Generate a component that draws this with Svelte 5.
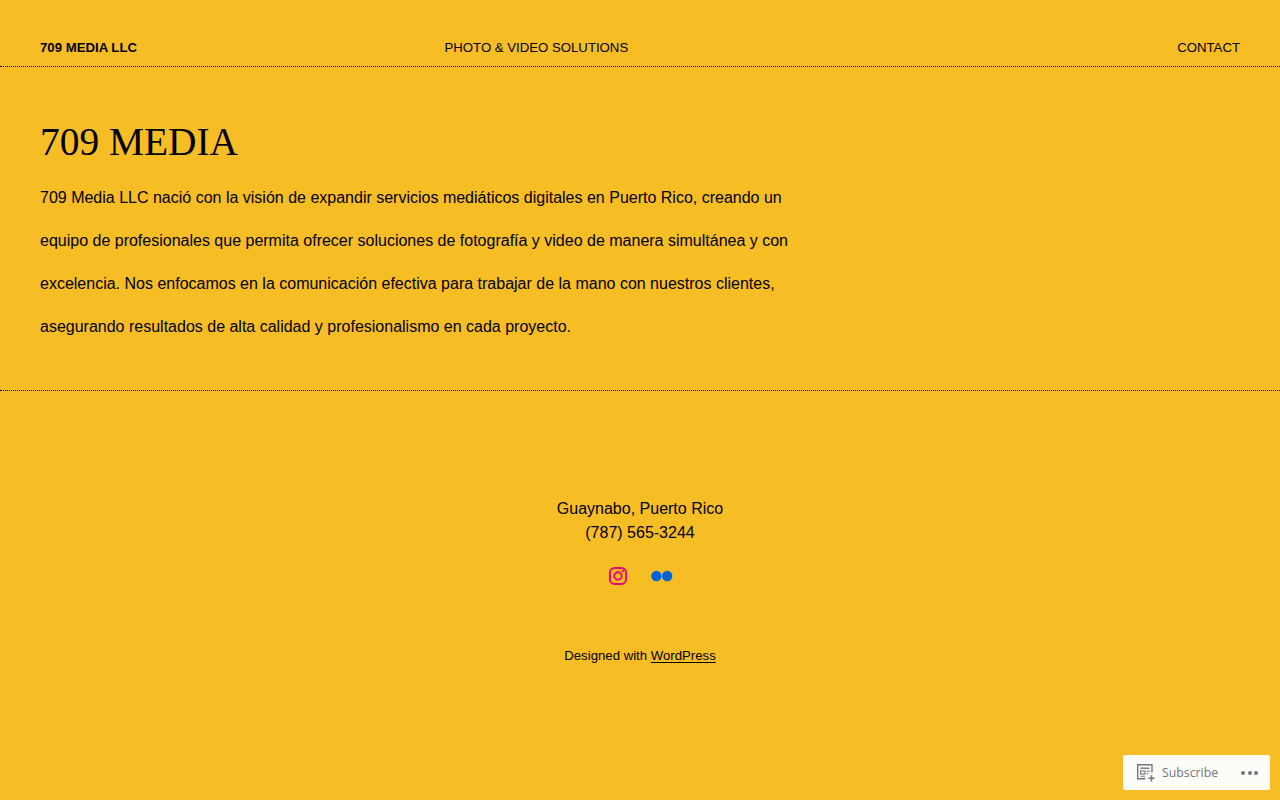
<script>
  const lines = [
    'Guaynabo, Puerto Rico',
    '(787) 565-3244'
  ];
</script>

<div class="page">
  <header class="top">
    <a class="brand" href="#home">709 MEDIA LLC</a>
    <a class="tagline" href="#home">PHOTO &amp; VIDEO SOLUTIONS</a>
    <a class="contact" href="#contact">CONTACT</a>
  </header>

  <main class="content">
    <h1>709 MEDIA</h1>
    <p>709 Media LLC nació con la visión de expandir servicios mediáticos digitales en Puerto Rico, creando un equipo de profesionales que permita ofrecer soluciones de fotografía y video de manera simultánea y con excelencia. Nos enfocamos en la comunicación efectiva para trabajar de la mano con nuestros clientes, asegurando resultados de alta calidad y profesionalismo en cada proyecto.</p>
  </main>

  <footer class="foot">
    <div class="address">
      {#each lines as line}
        <div>{line}</div>
      {/each}
    </div>
    <div class="social">
      <svg class="ig" width="20" height="20" viewBox="0 0 20 20" fill="none" stroke="#f00075" stroke-width="1.9" aria-label="Instagram">
        <rect x="1.95" y="1.95" width="16.1" height="16.1" rx="4.8" />
        <circle cx="10" cy="10" r="3.7" />
        <circle cx="14.8" cy="5.2" r="1.1" fill="#f00075" stroke="none" />
      </svg>
      <svg class="fl" width="24" height="24" viewBox="0 0 24 24" fill="#0063dc" aria-label="Flickr">
        <circle cx="6.4" cy="12" r="5.2" />
        <circle cx="17.2" cy="12" r="5.2" />
      </svg>
    </div>
    <div class="credit">Designed with <a href="#wp">WordPress</a></div>
  </footer>

  <div class="subscribe">
    <svg width="20" height="20" viewBox="0 0 20 20" fill="none" stroke="#72767a" stroke-width="1.4">
      <path d="M16 9.5V1.7H1.7v14h7.8" />
      <path d="M4.5 5.2h9" />
      <rect x="4.5" y="8" width="4.5" height="3" stroke-width="1.1" />
      <path d="M10.7 8.3h3M10.7 10.6h1.5M4.5 13.3h4.5" stroke-width="1.1" />
      <path d="M15.5 12.2v6.3M12.4 15.3h6.2" stroke-width="1.6" />
    </svg>
    <span class="label">Subscribe</span>
    <span class="dots"><i></i><i></i><i></i></span>
  </div>
</div>

<style>
  :global(body) {
    margin: 0;
    background: #f7bd25;
  }
  .page {
    min-height: 800px;
    background: #f7bd25;
    color: #000;
    font-family: "Liberation Sans", Arial, sans-serif;
    font-size: 16px;
    overflow: hidden;
  }
  a {
    color: #000;
    text-decoration: none;
  }
  .top {
    box-sizing: border-box;
    height: 67px;
    padding: 40px 40px 0;
    display: grid;
    grid-template-columns: 404.5px 1fr auto;
    font-size: 13.2px;
    line-height: 16px;
    border-bottom: 1px dotted #000;
  }
  .brand {
    font-weight: 700;
  }
  .content {
    box-sizing: border-box;
    height: 324px;
    padding: 52px 40px 0;
    border-bottom: 1px dotted #000;
  }
  h1 {
    margin: 0;
    font-family: "Liberation Serif", "Times New Roman", serif;
    font-weight: 400;
    font-size: 39.4px;
    line-height: 46px;
  }
  p {
    margin: 11px 0 0;
    width: 760px;
    line-height: 43px;
  }
  .foot {
    padding-top: 106px;
    text-align: center;
  }
  .address {
    line-height: 24px;
  }
  .social {
    margin-top: 19px;
    height: 24px;
    display: flex;
    justify-content: center;
    align-items: center;
    gap: 22px;
    padding-left: 2px;
  }
  .credit {
    margin-top: 58px;
    font-size: 13.2px;
    line-height: 20px;
  }
  .credit a {
    text-decoration: underline;
    text-decoration-thickness: 1px;
    text-underline-offset: 2px;
  }
  .subscribe {
    position: fixed;
    right: 10px;
    bottom: 10px;
    box-sizing: border-box;
    width: 147px;
    height: 35px;
    padding: 0 12px 0 13px;
    display: flex;
    align-items: center;
    background: #fdfcf9;
    border-radius: 3px;
    box-shadow: inset 0 0 0 1px #fff;
    color: #72767a;
    font-family: "Open Sans", sans-serif;
    font-size: 12.3px;
  }
  .label {
    margin-left: 6px;
  }
  .dots {
    margin-left: auto;
    display: flex;
    gap: 2.5px;
  }
  .dots i {
    width: 4px;
    height: 4px;
    border-radius: 50%;
    background: #72767a;
  }
</style>
